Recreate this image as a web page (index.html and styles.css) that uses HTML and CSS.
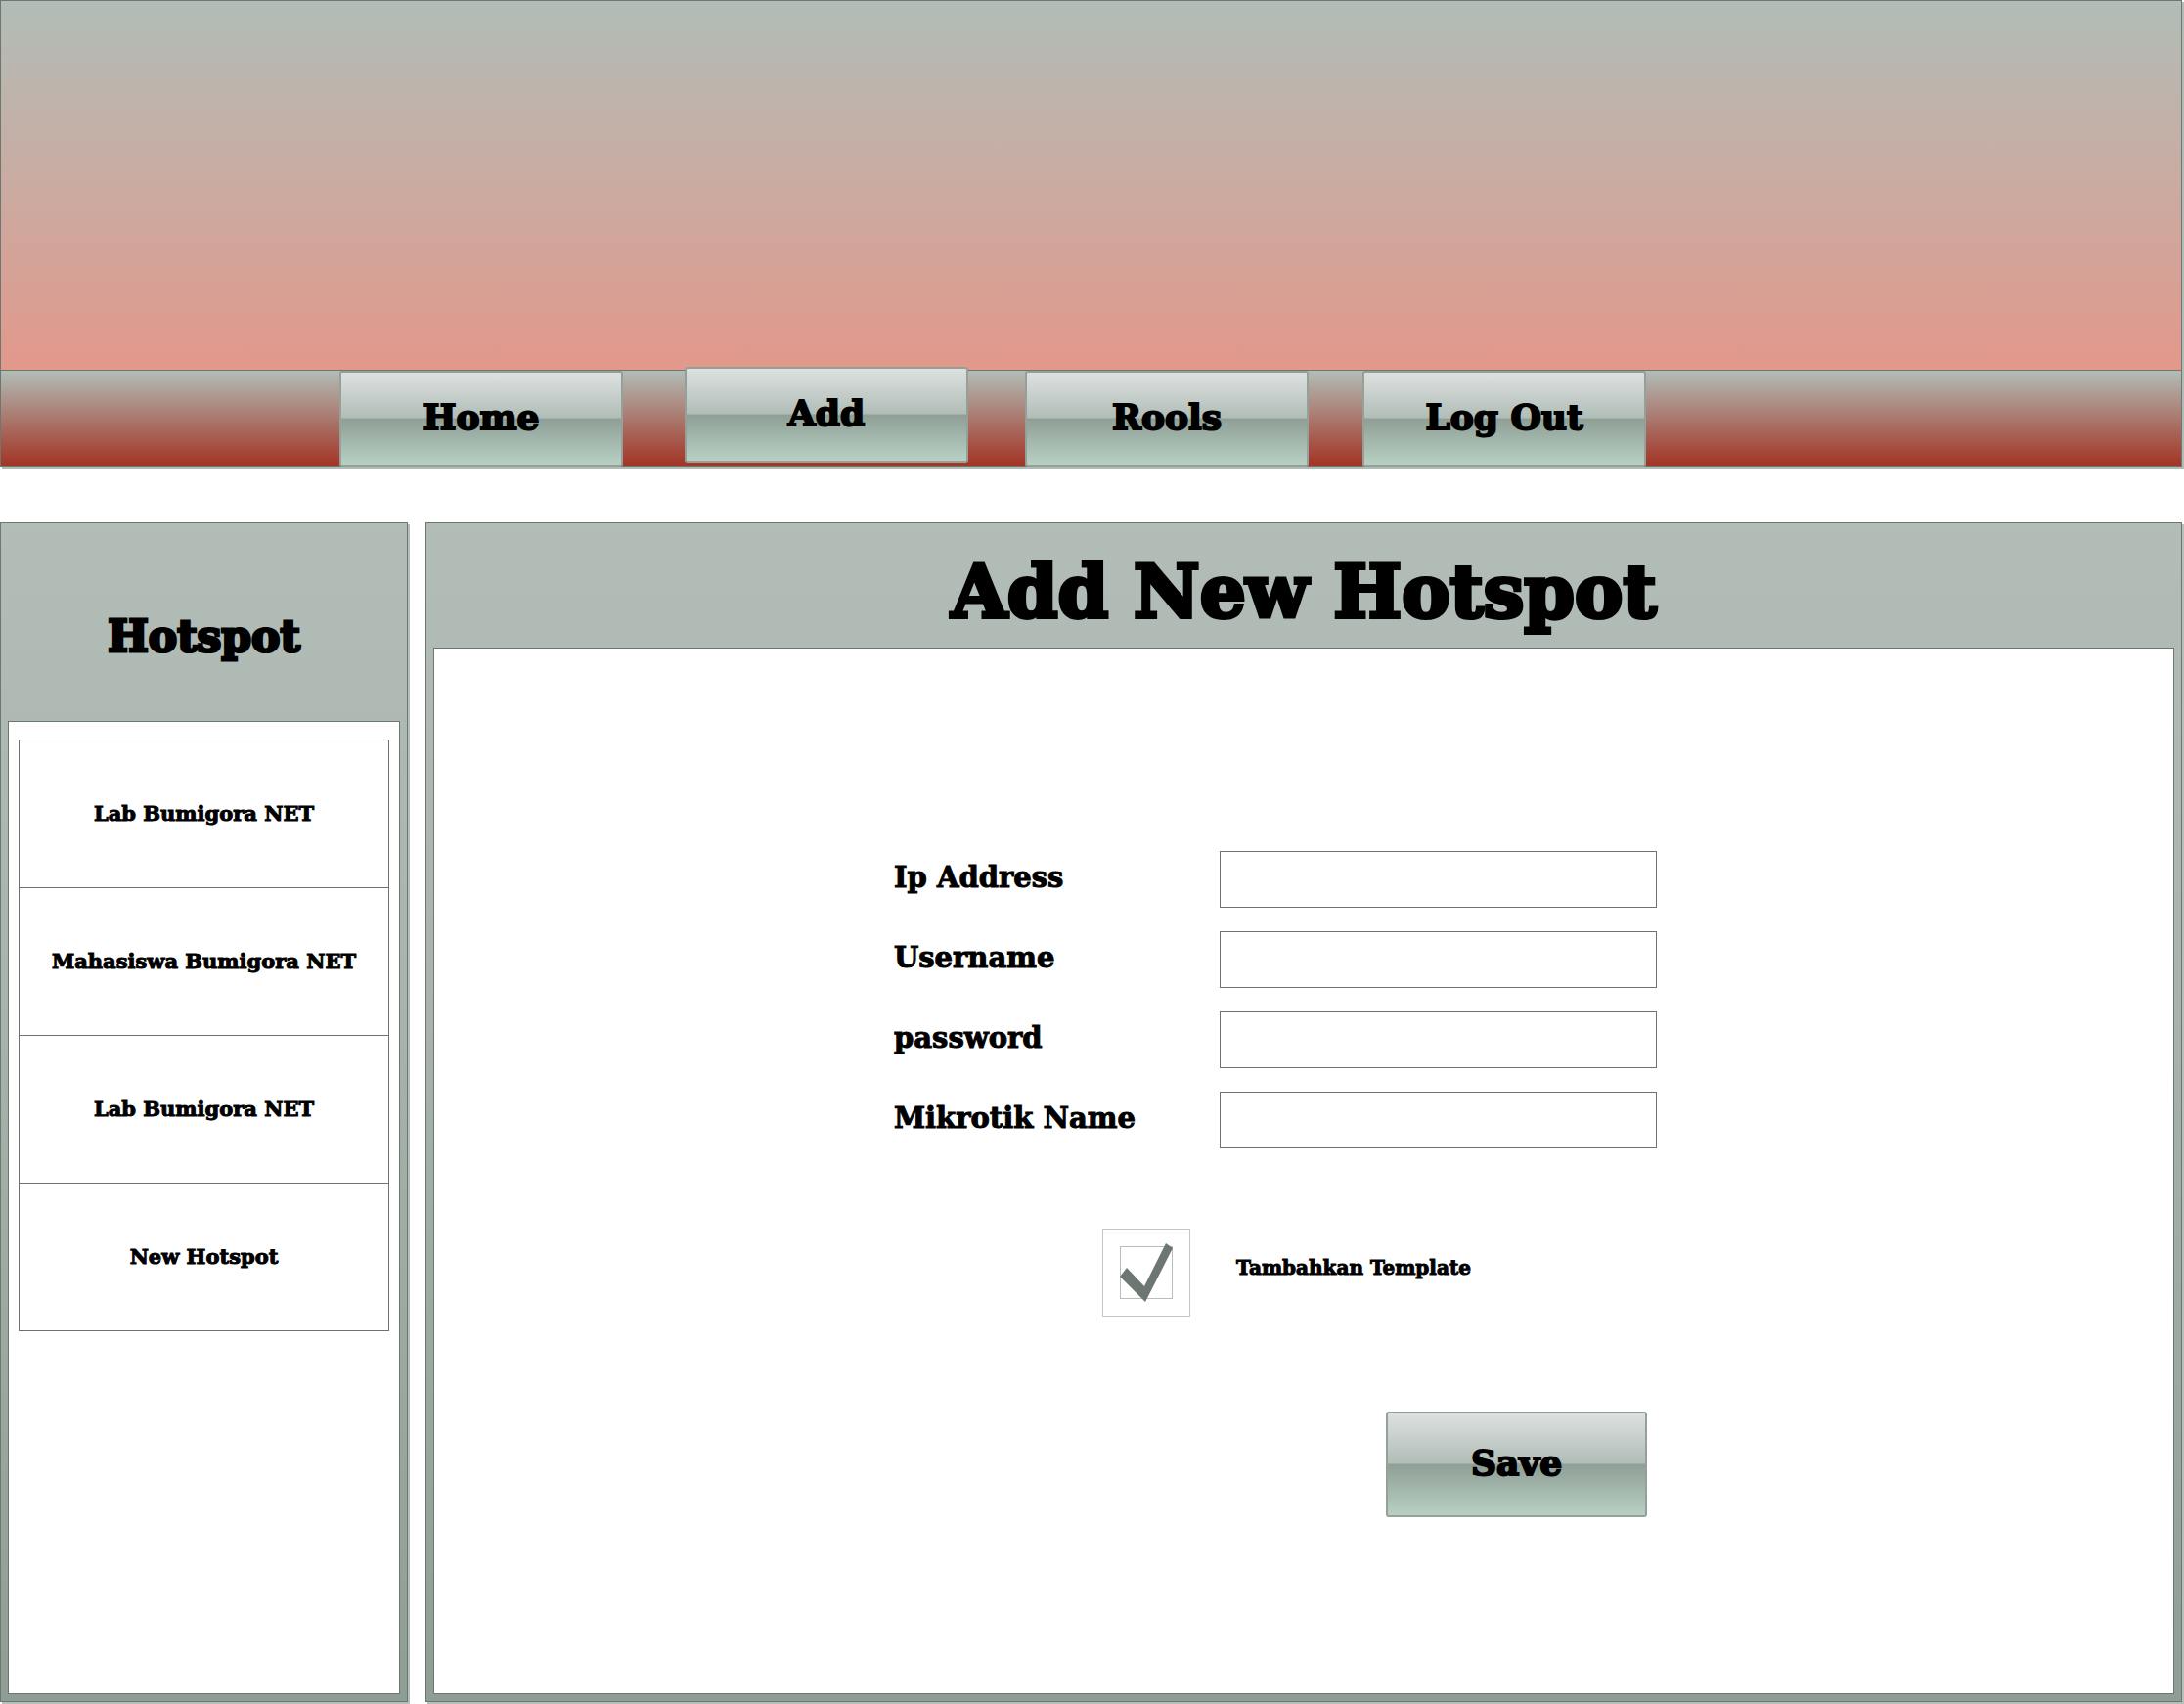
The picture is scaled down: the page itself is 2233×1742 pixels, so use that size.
FILE: index.html
```html
<!DOCTYPE html>
<html lang="id">
<head>
<meta charset="utf-8">
<meta name="viewport" content="width=device-width, initial-scale=1">
<title>Add New Hotspot</title>
<link rel="stylesheet" href="styles.css">
</head>
<body>
<div class="page">
  <header class="header">
    <div class="banner"></div>
    <nav class="nav">
      <button type="button" class="button nav-button nav-first">Home</button>
      <button type="button" class="button nav-button nav-active">Add</button>
      <button type="button" class="button nav-button">Rools</button>
      <button type="button" class="button nav-button">Log Out</button>
    </nav>
  </header>
  <div class="content">
    <aside class="panel sidebar">
      <h2 class="sidebar-title">Hotspot</h2>
      <div class="panel-body sidebar-body">
        <ul class="list">
          <li class="list-item"><a class="list-link" href="#lab">Lab Bumigora NET</a></li>
          <li class="list-item"><a class="list-link" href="#mahasiswa">Mahasiswa Bumigora NET</a></li>
          <li class="list-item"><a class="list-link" href="#lab2">Lab Bumigora NET</a></li>
          <li class="list-item"><a class="list-link" href="#new">New Hotspot</a></li>
        </ul>
      </div>
    </aside>
    <main class="panel main">
      <h1 class="main-title">Add New Hotspot</h1>
      <div class="panel-body main-body">
        <form class="form">
          <div class="fields">
            <label class="label" for="ip">Ip Address</label>
            <input class="input" id="ip" type="text">
            <label class="label" for="username">Username</label>
            <input class="input" id="username" type="text">
            <label class="label" for="password">password</label>
            <input class="input" id="password" type="password">
            <label class="label" for="mikrotik">Mikrotik Name</label>
            <input class="input" id="mikrotik" type="text">
          </div>
          <div class="option">
            <span class="check">
              <input class="check-input" id="template" type="checkbox" checked>
              <svg class="check-mark" viewBox="0 0 90 90" aria-hidden="true">
                <rect x="18.5" y="18.5" width="53" height="53" fill="none" stroke="#b9bcba"/>
                <path class="tick" d="M25 40 L18 49 L44 75 L72 20 L65 15 L43 59 Z" fill="#6c7771"/>
              </svg>
            </span>
            <label class="option-label" for="template">Tambahkan Template</label>
          </div>
          <button type="submit" class="button save">Save</button>
        </form>
      </div>
    </main>
  </div>
</div>
</body>
</html>
```

FILE: styles.css
```css
* {
  box-sizing: border-box;
}

body {
  margin: 0;
  background: #fff;
  color: #000;
  font-family: "Cooper Black", "DejaVu Serif", serif;
  font-weight: 700;
}

.page {
  display: flex;
  flex-direction: column;
  min-height: 100vh;
  padding: 0 2px 2px 0;
}

.header {
  border: 1px solid #6b776f;
  box-shadow: 2px 2px 0 #b1bcb6;
}

.banner {
  height: 377px;
  background: linear-gradient(#b1bdb7, #e3988b);
}

.nav {
  display: grid;
  grid-template-columns: 346fr 353fr 348fr 345fr 837fr;
  height: 98px;
  border-top: 1px solid #6b776f;
  background: linear-gradient(#b1bdb7, #a33425);
}

.button {
  padding: 0 0 4px;
  border: 2px solid #94a098;
  border-radius: 3px;
  background: linear-gradient(#dde1e0, #b1bdb7 49%, #8f9f96 50%, #b8d0c4);
  color: #000;
  font: inherit;
  font-size: 36px;
  -webkit-text-stroke: 2px #000;
}

.nav-button {
  width: 290px;
  height: 98px;
}

.nav-first {
  grid-column: 2;
}

.nav-active {
  margin-top: -4px;
}

.content {
  display: grid;
  grid-template-columns: 417px minmax(0, 1fr);
  flex: 1;
  gap: 18px;
  margin-top: 57px;
}

.panel {
  display: flex;
  flex-direction: column;
  padding: 0 7px 7px;
  border: 1px solid #6b776f;
  background: linear-gradient(#b2bdb7, #a8b4ad 40%, #8f9e95);
  box-shadow: 2px 2px 0 #b6bfba;
}

.panel-body {
  flex: 1;
  border: 1px solid #6b776f;
  background: #fff;
}

.sidebar-title,
.main-title {
  display: flex;
  align-items: center;
  justify-content: center;
  margin: 0;
}

.sidebar-title {
  height: 202px;
  padding-top: 28px;
  font-size: 44px;
  -webkit-text-stroke: 3px #000;
}

.main-title {
  height: 127px;
  padding-top: 12px;
  font-size: 74px;
  -webkit-text-stroke: 4px #000;
}

.sidebar-body {
  padding: 18px 10px;
}

.list {
  margin: 0;
  padding: 0;
  border: 1px solid #6e7370;
  list-style: none;
}

.list-item + .list-item {
  border-top: 1px solid #6e7370;
}

.list-link {
  display: flex;
  align-items: center;
  justify-content: center;
  height: 150px;
  padding-bottom: 2px;
  color: #000;
  font-size: 21px;
  text-decoration: none;
  -webkit-text-stroke: 1px #000;
}

.main-body {
  display: flex;
  justify-content: center;
  padding: 207px 58px 60px 0;
}

.form {
  display: flex;
  flex-direction: column;
  width: 780px;
}

.fields {
  display: grid;
  grid-template-columns: 333px 1fr;
  align-items: center;
  row-gap: 24px;
}

.label {
  padding-bottom: 4px;
  font-size: 29px;
  -webkit-text-stroke: 1px #000;
}

.input {
  width: 100%;
  height: 58px;
  padding: 0 12px;
  border: 1px solid #6e7370;
  border-radius: 0;
  background: #fff;
  color: #000;
  font: inherit;
  font-size: 24px;
}

.option {
  display: flex;
  align-items: center;
  gap: 47px;
  margin: 82px 0 0 213px;
}

.check {
  display: grid;
  width: 90px;
  height: 90px;
}

.check-input {
  grid-area: 1 / 1;
  width: 90px;
  height: 90px;
  margin: 0;
  border: 1px solid #c4c6c5;
  appearance: none;
}

.check-mark {
  grid-area: 1 / 1;
  width: 90px;
  height: 90px;
  pointer-events: none;
}

.tick {
  visibility: hidden;
}

.check-input:checked + .check-mark .tick {
  visibility: visible;
}

.option-label {
  padding-bottom: 10px;
  font-size: 20px;
  -webkit-text-stroke: 1px #000;
}

.save {
  align-self: flex-end;
  width: 267px;
  height: 108px;
  margin: 97px 10px 0 0;
}
```
